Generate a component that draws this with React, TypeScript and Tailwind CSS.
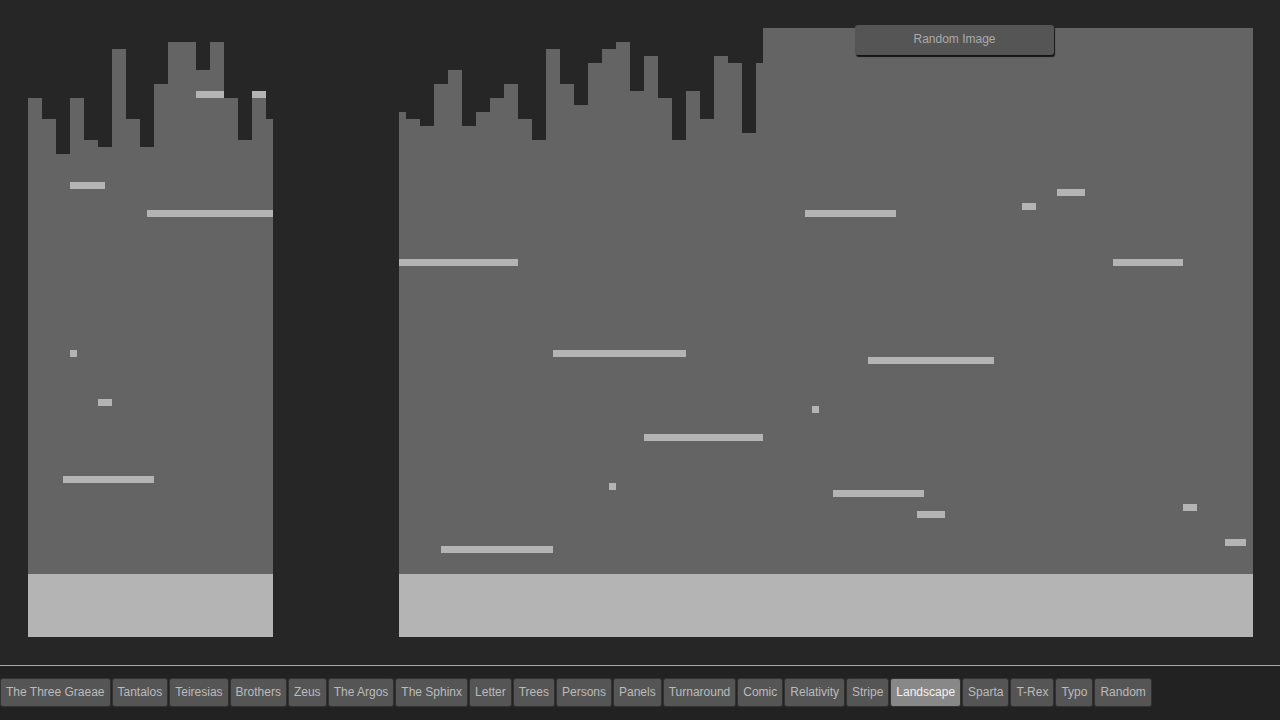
const COL = "#646464"
const LIGHT = "#b4b4b4"

// column tops on a 14px grid that starts at x=28
const leftTops = [98, 119, 154, 98, 140, 147, 49, 119, 147, 84, 42, 42, 70, 42, 98, 140, 98, 119]
const rightTops: [number, number][] = [
  [26, 112], [27, 119], [28, 126], [29, 84], [30, 70], [31, 126], [32, 112], [33, 98],
  [34, 84], [35, 119], [36, 140], [37, 49], [38, 84], [39, 105], [40, 63], [41, 49],
  [42, 42], [43, 91], [44, 56], [45, 98], [46, 140], [47, 91], [48, 119], [49, 56],
  [50, 63], [51, 133], [52, 63],
]

// platforms: x, y, w (all 7px tall)
const leftPlatforms = [
  [196, 91, 28], [252, 91, 14], [70, 182, 35], [147, 210, 126], [70, 350, 7],
  [98, 399, 14], [63, 476, 91],
]
const rightPlatforms = [
  [399, 259, 119], [553, 350, 133], [805, 210, 91], [1022, 203, 14], [1057, 189, 28],
  [1113, 259, 70], [812, 406, 7], [644, 434, 119], [609, 483, 7], [833, 490, 91],
  [917, 511, 28], [868, 357, 126], [441, 546, 112], [1183, 504, 14], [1225, 539, 21],
]

const tabs = [
  "The Three Graeae", "Tantalos", "Teiresias", "Brothers", "Zeus", "The Argos", "The Sphinx",
  "Letter", "Trees", "Persons", "Panels", "Turnaround", "Comic", "Relativity", "Stripe",
  "Landscape", "Sparta", "T-Rex", "Typo", "Random",
]

const LeftScene = () => (
  <svg width="245" height="609" viewBox="28 28 245 609" className="block">
    {leftTops.map((top, i) => (
      <rect key={i} x={28 + i * 14} y={top} width="14" height={574 - top} fill={COL} />
    ))}
    {leftPlatforms.map(([x, y, w], i) => (
      <rect key={i} x={x} y={y} width={w} height="7" fill={LIGHT} />
    ))}
    <rect x="28" y="574" width="245" height="63" fill={LIGHT} />
  </svg>
)

const RightScene = () => (
  <svg width="854" height="609" viewBox="399 28 854 609" className="block">
    {rightTops.map(([i, top]) => (
      <rect key={i} x={28 + i * 14} y={top} width="14" height={574 - top} fill={COL} />
    ))}
    <rect x="763" y="28" width="490" height="546" fill={COL} />
    {rightPlatforms.map(([x, y, w], i) => (
      <rect key={i} x={x} y={y} width={w} height="7" fill={LIGHT} />
    ))}
    <rect x="399" y="574" width="854" height="63" fill={LIGHT} />
  </svg>
)

const App = () => {
  return (
    <div className="w-[1280px] h-[720px] bg-[#262626] flex flex-col font-['Liberation_Sans',Arial,sans-serif] overflow-hidden">
      {/* scene */}
      <div className="relative h-[665px] flex gap-[126px] pl-[28px] pt-[28px]">
        <LeftScene />
        <RightScene />
        <button className="absolute left-[855px] top-[25px] w-[199px] h-[30px] pb-[3px] bg-[#555555] rounded-[3px] text-[12px] text-[#aaaaaa] shadow-[1px_2px_1px_#151515]">
          Random Image
        </button>
      </div>

      {/* tabs */}
      <div className="flex-1 border-t border-[#a9a9a9] bg-[#222222] pt-[12px] flex items-start gap-px">
        {tabs.map((t) => (
          <button
            key={t}
            className={`h-[29px] px-[5px] pb-[2px] border border-[#333333] rounded-[3px] text-[12px] whitespace-nowrap ${
              t === "Landscape" ? "bg-[#888888] text-[#f2f2f2]" : "bg-[#555555] text-[#bbbbbb]"
            }`}
          >
            {t}
          </button>
        ))}
      </div>
    </div>
  )
}

export default App
